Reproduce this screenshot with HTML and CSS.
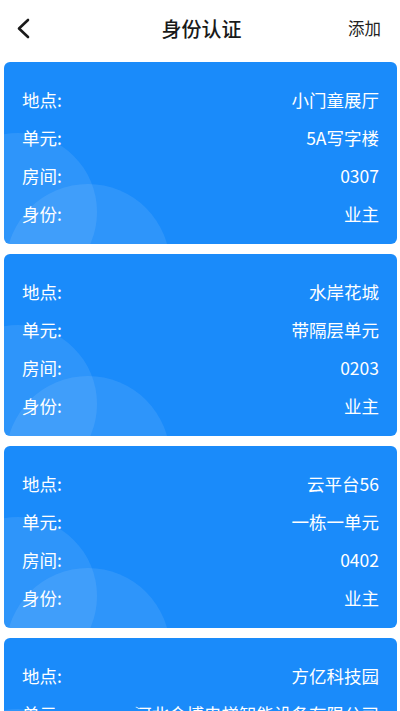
FILE: index.html
```html
<!DOCTYPE html>
<html lang="zh-CN">
<head>
<meta charset="utf-8">
<title>身份认证</title>
<link rel="stylesheet" href="styles.css">
</head>
<body>
<header class="topbar">
  <span class="back">
    <svg width="16" height="22" viewBox="0 0 16 22"><path d="M13 3 L4 11.5 L13 20" fill="none" stroke="#1a1a1a" stroke-width="2.6" stroke-linecap="round" stroke-linejoin="round"/></svg>
  </span>
  <h1 class="title">身份认证</h1>
  <span class="add">添加</span>
</header>
<main class="list">
  <section class="card">
    <i class="circle c1"></i><i class="circle c2"></i>
    <div class="row"><span>地点:</span><span>小门童展厅</span></div>
    <div class="row"><span>单元:</span><span>5A写字楼</span></div>
    <div class="row"><span>房间:</span><span>0307</span></div>
    <div class="row"><span>身份:</span><span>业主</span></div>
  </section>
  <section class="card">
    <i class="circle c1"></i><i class="circle c2"></i>
    <div class="row"><span>地点:</span><span>水岸花城</span></div>
    <div class="row"><span>单元:</span><span>带隔层单元</span></div>
    <div class="row"><span>房间:</span><span>0203</span></div>
    <div class="row"><span>身份:</span><span>业主</span></div>
  </section>
  <section class="card">
    <i class="circle c1"></i><i class="circle c2"></i>
    <div class="row"><span>地点:</span><span>云平台56</span></div>
    <div class="row"><span>单元:</span><span>一栋一单元</span></div>
    <div class="row"><span>房间:</span><span>0402</span></div>
    <div class="row"><span>身份:</span><span>业主</span></div>
  </section>
  <section class="card">
    <i class="circle c1"></i><i class="circle c2"></i>
    <div class="row"><span>地点:</span><span>方亿科技园</span></div>
    <div class="row"><span>单元:</span><span>河北金博电梯智能设备有限公司</span></div>
  </section>
</main>
</body>
</html>
```
FILE: styles.css
```css
html, body {
  margin: 0;
  padding: 0;
  overflow: hidden;
  background: #ffffff;
}
body {
  font-family: "Noto Sans CJK SC", "Noto Sans", sans-serif;
  color: #1a1a1a;
}
.topbar {
  height: 56px;
  display: flex;
  align-items: center;
  justify-content: space-between;
  padding: 0 19px 0 15px;
  box-sizing: border-box;
}
.back {
  display: flex;
  align-items: center;
  width: 20px;
  height: 22px;
}
.title {
  margin: 0;
  font-size: 20px;
  font-weight: 500;
  color: #1a1a1a;
  flex: 1;
  text-align: center;
  padding-left: 20px;
}
.add {
  font-size: 16.5px;
  color: #222;
}
.list {
  display: flex;
  flex-direction: column;
  gap: 10px;
  padding: 6px 3px 0 4px;
}
.card {
  position: relative;
  overflow: hidden;
  background: #1a8bfa;
  border-radius: 6px;
  padding: 19px 18px 11px 18px;
  color: #ffffff;
}
.row {
  position: relative;
  height: 38px;
  display: flex;
  align-items: center;
  justify-content: space-between;
  font-size: 17.5px;
  line-height: 1;
}
.circle {
  position: absolute;
  border-radius: 50%;
  background: rgba(255, 255, 255, 0.09);
}
.c1 {
  left: -65px;
  top: 71px;
  width: 158px;
  height: 158px;
}
.c2 {
  left: 2px;
  top: 122px;
  width: 164px;
  height: 164px;
}
```
